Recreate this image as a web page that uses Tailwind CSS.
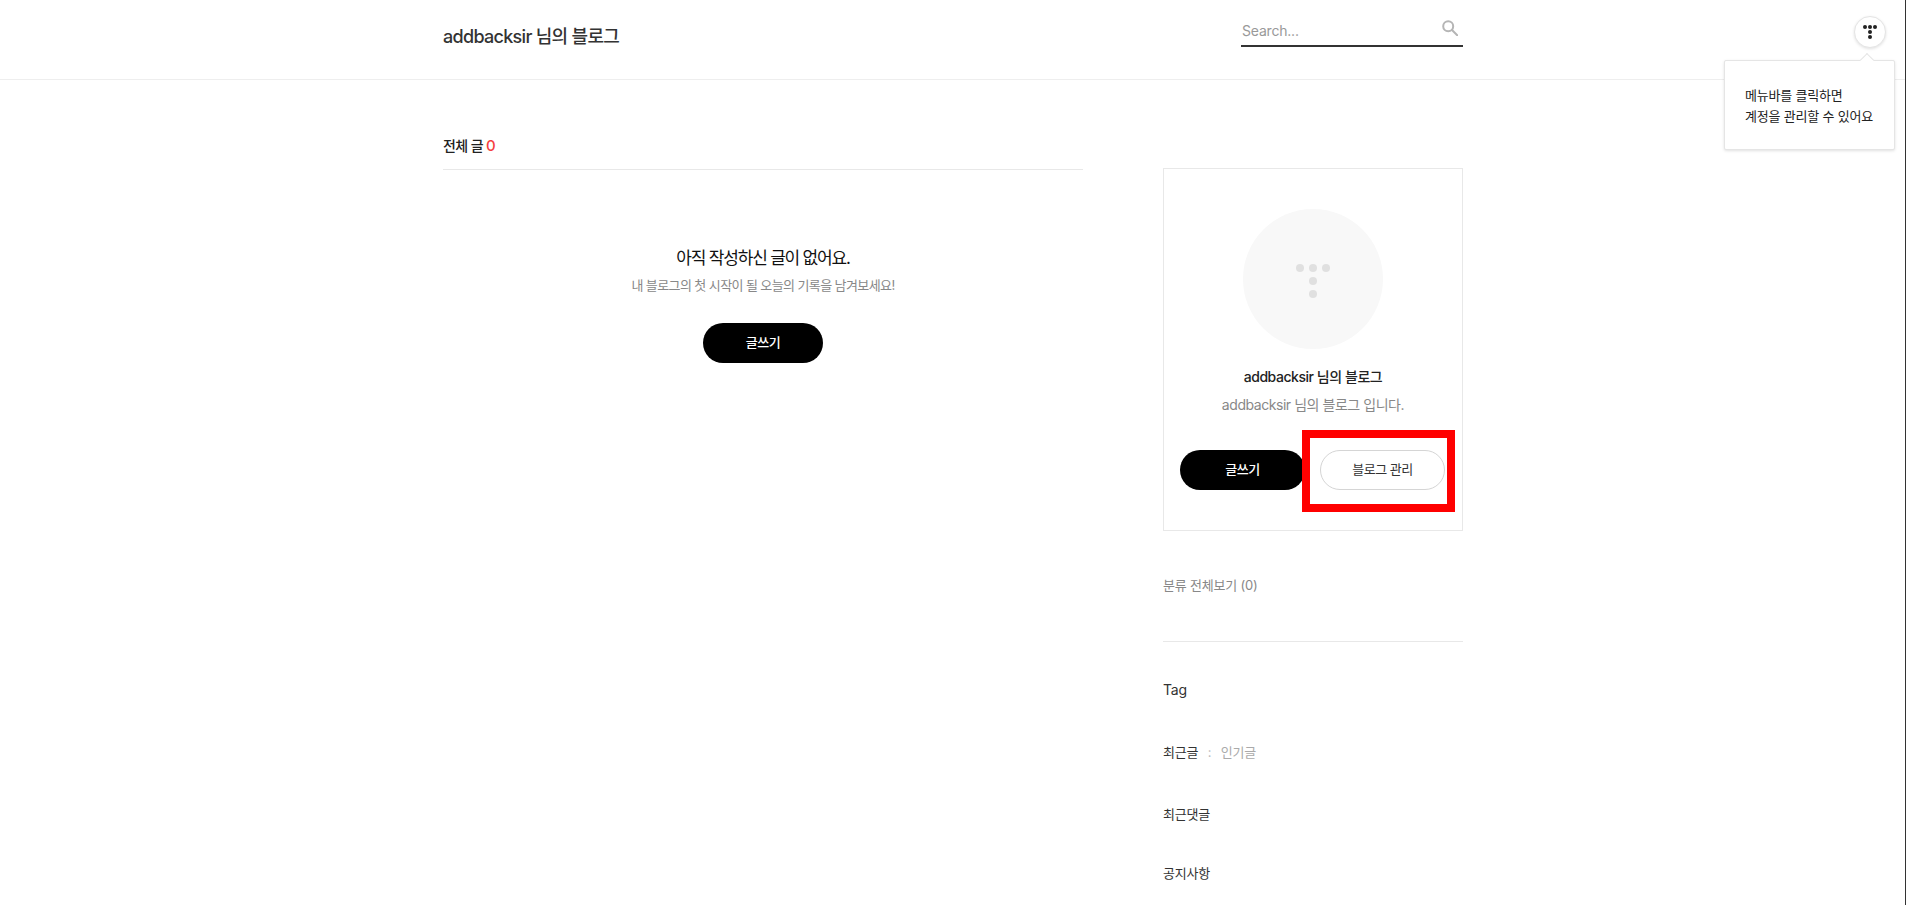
<!DOCTYPE html>
<html lang="ko">
<head>
  <meta charset="UTF-8">
  <title>addbacksir 님의 블로그</title>
  <script src="https://cdn.jsdelivr.net/npm/@tailwindcss/browser@4"></script>
</head>
<body class="bg-white font-['Inter','Noto_Sans_CJK_KR',sans-serif] text-[#333] overflow-hidden h-[905px]">
  <!-- header -->
  <header class="h-[80px] border-b border-[#eeeeee]">
    <div class="w-[1020px] mx-auto h-full flex items-center justify-between">
      <h1 class="text-[18px] font-medium tracking-[-0.7px] -mt-[6px]">addbacksir 님의 블로그</h1>
      <div class="w-[222px] h-[30px] border-b-2 border-[#333] flex items-start justify-between -mt-[15px] pl-[1px] pr-[5px]">
        <span class="text-[14px] text-[#999] leading-[24px] tracking-[-0.2px] mt-[2px]">Search...</span>
        <svg class="w-[16px] h-[16px] mt-[3px]" viewBox="0 0 16 16" fill="none" stroke="#b5b5b5" stroke-width="2">
          <circle cx="6.2" cy="6.2" r="5"/>
          <path d="M10 10l5.2 5.2" stroke-linecap="round"/>
        </svg>
      </div>
    </div>
  </header>

  <!-- account menu -->
  <button class="absolute left-[1854px] top-[16px] w-[32px] h-[32px] rounded-full bg-white border border-[#e5e5e5] shadow-[0_1px_3px_rgba(0,0,0,0.12)] flex flex-col items-center justify-center gap-[1px]">
    <span class="flex gap-[1px]">
      <i class="w-[4px] h-[4px] rounded-full bg-[#222]"></i>
      <i class="w-[4px] h-[4px] rounded-full bg-[#222]"></i>
      <i class="w-[4px] h-[4px] rounded-full bg-[#222]"></i>
    </span>
    <i class="w-[4px] h-[4px] rounded-full bg-[#222]"></i>
    <i class="w-[4px] h-[4px] rounded-full bg-[#222]"></i>
  </button>
  <div class="absolute left-[1724px] top-[60px] w-[171px] h-[90px] bg-white border border-[#e5e5e5] rounded-[2px] shadow-[0_1px_3px_rgba(0,0,0,0.12)] pl-[20px] pt-[24px] text-[13px] leading-[21px] tracking-[-0.2px] text-[#222]">
    <span class="absolute left-[137px] -top-[6px] w-[10px] h-[10px] bg-white border-l border-t border-[#e5e5e5] rotate-45"></span>
    <p>메뉴바를 클릭하면</p>
    <p>계정을 관리할 수 있어요</p>
  </div>
  <!-- dark edge on the right of the window -->
  <div class="absolute right-0 top-0 w-[1px] h-[905px] bg-[#333]"></div>

  <!-- content -->
  <div class="w-[1020px] mx-auto flex justify-between">
    <main class="w-[640px]">
      <h2 class="h-[90px] pt-[54px] border-b border-[#e8e8e8] text-[14px] leading-[24px] font-medium tracking-[-0.6px] text-[#222]">전체 글 <span class="text-[15px] text-[#f53f3f]">0</span></h2>
      <section class="flex flex-col items-center pt-[74px]">
        <p class="text-[17px] leading-[28px] tracking-[-1.2px] text-[#111]">아직 작성하신 글이 없어요.</p>
        <p class="text-[13px] leading-[20px] tracking-[-0.6px] text-[#888] mt-[3px]">내 블로그의 첫 시작이 될 오늘의 기록을 남겨보세요!</p>
        <a class="mt-[28px] w-[120px] h-[40px] rounded-full bg-black text-white text-[13px] font-medium tracking-[-0.5px] flex items-center justify-center">글쓰기</a>
      </section>
    </main>

    <aside class="w-[300px] pt-[88px]">
      <div class="relative h-[363px] border border-[#e8e8e8] px-[16px] pt-[40px]">
        <div class="w-[140px] h-[140px] mx-auto rounded-full bg-[#f8f8f8] pt-[4px] flex flex-col items-center justify-center gap-[5px]">
          <span class="flex gap-[5px]">
            <i class="w-[8px] h-[8px] rounded-full bg-[#e0e0e0]"></i>
            <i class="w-[8px] h-[8px] rounded-full bg-[#e0e0e0]"></i>
            <i class="w-[8px] h-[8px] rounded-full bg-[#e0e0e0]"></i>
          </span>
          <i class="w-[8px] h-[8px] rounded-full bg-[#e0e0e0]"></i>
          <i class="w-[8px] h-[8px] rounded-full bg-[#e0e0e0]"></i>
        </div>
        <p class="text-[14px] leading-[20px] font-medium text-center tracking-[-0.45px] mt-[18px] text-[#222]">addbacksir 님의 블로그</p>
        <p class="text-[14px] leading-[20px] text-center text-[#888] tracking-[-0.45px] mt-[8px]">addbacksir 님의 블로그 입니다.</p>
        <div class="flex gap-[15px] mt-[35px]">
          <a class="w-[125px] h-[40px] rounded-full bg-black text-white text-[13px] font-medium tracking-[-0.5px] flex items-center justify-center">글쓰기</a>
          <a class="w-[125px] h-[40px] rounded-full bg-white border border-[#d5d5d5] text-[13px] tracking-[-0.5px] text-[#333] flex items-center justify-center">블로그 관리</a>
        </div>
        <!-- red highlight drawn over the screenshot -->
        <div class="absolute left-[138px] top-[261px] w-[153px] h-[82px] border-[8px] border-[#ff0000]"></div>
      </div>

      <p class="text-[13px] leading-[20px] text-[#888] tracking-[-0.2px] mt-[44px]">분류 전체보기 (0)</p>
      <div class="border-t border-[#e8e8e8] mt-[46px]"></div>
      <p class="text-[14px] leading-[20px] tracking-[-0.2px] text-[#333] mt-[38px]">Tag</p>
      <p class="text-[13px] leading-[20px] text-[#333] tracking-[-0.2px] mt-[42px]">최근글 <span class="text-[#bbb] mx-[6px]">:</span> <span class="text-[#aaa]">인기글</span></p>
      <p class="text-[13px] leading-[20px] text-[#333] tracking-[-0.2px] mt-[42px]">최근댓글</p>
      <p class="text-[13px] leading-[20px] text-[#333] tracking-[-0.2px] mt-[39px]">공지사항</p>
    </aside>
  </div>
</body>
</html>
